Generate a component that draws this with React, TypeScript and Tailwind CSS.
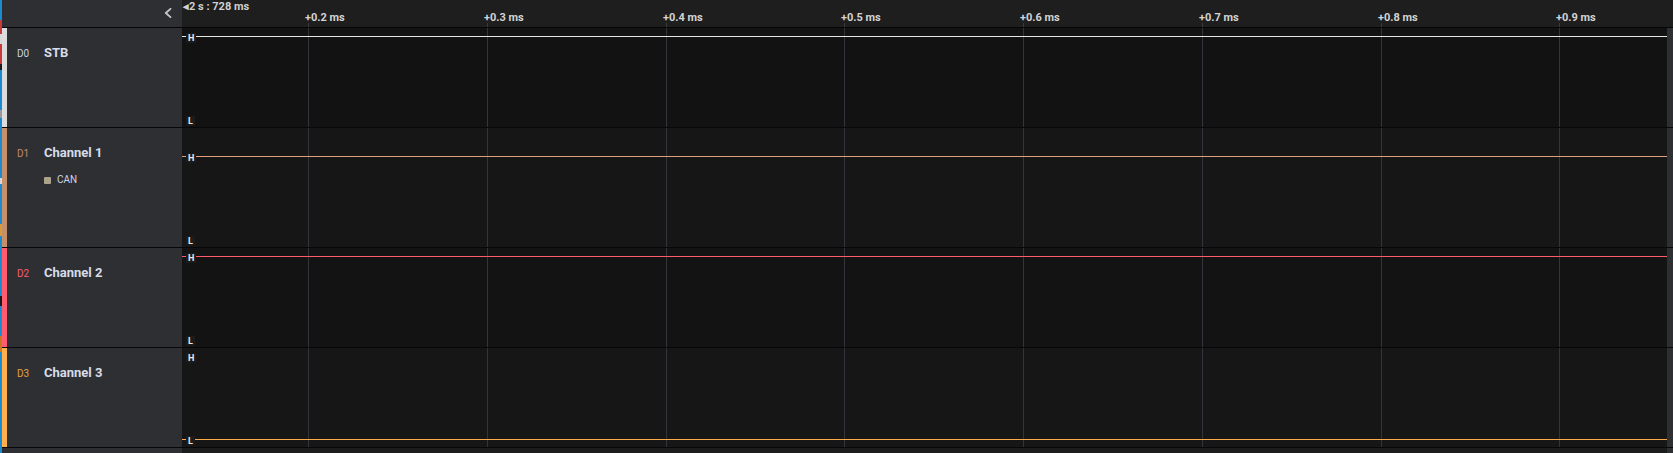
import React from "react";

type Channel = {
  id: string;
  name: string;
  color: string;
  strip: string;
  labelColor: string;
  level: "H" | "L";
  height: string;
  plotBg: string;
  decoder?: string;
  lanePad: string;
};

const channels: Channel[] = [
  {
    id: "D0",
    name: "STB",
    color: "bg-[#e6e6e6]",
    strip: "bg-[#dcdcdc]",
    labelColor: "text-[#c8d4e4]",
    level: "H",
    height: "h-[100px]",
    plotBg: "bg-[#121212]",
    lanePad: "pt-[8px]",
  },
  {
    id: "D1",
    name: "Channel 1",
    color: "bg-[#e0a07c]",
    strip: "bg-[#c4906c]",
    labelColor: "text-[#c48a6a]",
    level: "H",
    height: "h-[120px]",
    plotBg: "bg-[#161616]",
    decoder: "CAN",
    lanePad: "pt-[28px]",
  },
  {
    id: "D2",
    name: "Channel 2",
    color: "bg-[#ff5c6c]",
    strip: "bg-[#ff5c70]",
    labelColor: "text-[#ff5a6a]",
    level: "H",
    height: "h-[100px]",
    plotBg: "bg-[#131313]",
    lanePad: "pt-[8px]",
  },
  {
    id: "D3",
    name: "Channel 3",
    color: "bg-[#ffaa48]",
    strip: "bg-[#ffb04c]",
    labelColor: "text-[#e8a040]",
    level: "L",
    height: "h-[100px]",
    plotBg: "bg-[#161616]",
    lanePad: "pt-[8px]",
  },
];

// tick positions relative to the plot's left edge
const ticks = [0.2, 0.3, 0.4, 0.5, 0.6, 0.7, 0.8, 0.9].map((t, i) => ({
  label: `+${t.toFixed(1)} ms`,
  x: Math.round(126 + i * 178.75),
}));

function GridLines() {
  return (
    <>
      {ticks.map((t) => (
        <div
          key={t.label}
          className="absolute top-0 bottom-0 w-px bg-[#34353a]"
          style={{ left: t.x }}
        />
      ))}
    </>
  );
}

function LevelTag({ text }: { text: string }) {
  return (
    <span className="relative z-10 bg-[#1b1b1b] px-[2px] text-[9px] leading-[11px] font-bold text-[#e8e8e8]">
      {text}
    </span>
  );
}

function Lane({ ch }: { ch: Channel }) {
  return (
    <div className={`relative flex-1 ${ch.plotBg} overflow-hidden`}>
      <GridLines />
      <div className={`relative h-full flex flex-col ${ch.lanePad} pb-[8px]`}>
        <div className="relative flex-1 flex flex-col justify-between">
          {/* high rail */}
          <div className="relative flex items-center h-0">
            {ch.level === "H" && (
              <div className={`absolute left-0 right-0 h-px ${ch.color}`} />
            )}
            <div className="pl-[4px]">
              <LevelTag text="H" />
            </div>
          </div>
          {/* low rail */}
          <div className="relative flex items-center h-0">
            {ch.level === "L" && (
              <div className={`absolute left-0 right-0 h-px ${ch.color}`} />
            )}
            <div className="pl-[4px]">
              <LevelTag text="L" />
            </div>
          </div>
        </div>
      </div>
    </div>
  );
}

export default function App() {
  return (
    <div
      className="w-[1673px] h-[453px] flex bg-[#1c1c1c] overflow-hidden"
      style={{ fontFamily: "Roboto, 'Liberation Sans', sans-serif" }}
    >
      {/* sliver of the window behind */}
      <div className="w-[2px] flex flex-col bg-[#1c8ad0]">
        <div className="h-[20px]" />
        <div className="h-[14px] bg-[#c83a3a]" />
        <div className="h-[10px] bg-[#d8d8d8]" />
        <div className="h-[20px] bg-[#c83a3a]" />
        <div className="h-[6px] bg-[#1a1a1a]" />
        <div className="h-[40px]" />
        <div className="h-[8px] bg-[#9a9a9a]" />
        <div className="h-[60px]" />
        <div className="h-[6px] bg-[#d8d8d8]" />
        <div className="h-[40px]" />
        <div className="h-[12px] bg-[#d89a3a]" />
        <div className="h-[60px]" />
        <div className="h-[10px] bg-[#1a1a1a]" />
        <div className="h-[30px]" />
        <div className="h-[16px] bg-[#c8781e]" />
        <div className="flex-1" />
      </div>

      <div className="flex-1 flex flex-col">
        {/* header */}
        <div className="flex h-[28px] border-b border-[#060606]">
          <div className="w-[180px] bg-[#2e2f33] flex items-start justify-end pr-[10px] pt-[8px]">
            <svg width="8" height="10" viewBox="0 0 8 10" fill="none">
              <path
                d="M6.5 0.8 L1.8 5 L6.5 9.2"
                stroke="#c4c6cc"
                strokeWidth="1.8"
                strokeLinecap="round"
                strokeLinejoin="round"
              />
            </svg>
          </div>
          <div className="relative flex-1 bg-[#1e1e1e]">
            <div className="absolute left-[1px] top-0 text-[11px] leading-[13px] font-bold text-[#d0d0d0]">
              ◂2 s : 728 ms
            </div>
            {ticks.map((t) => (
              <React.Fragment key={t.label}>
                <div
                  className="absolute top-[11px] text-[11px] leading-[13px] font-bold text-[#d4d4d4] whitespace-nowrap"
                  style={{ left: t.x - 3 }}
                >
                  {t.label}
                </div>
                <div
                  className="absolute top-[23px] bottom-0 w-px bg-[#3a3b40]"
                  style={{ left: t.x }}
                />
              </React.Fragment>
            ))}
          </div>
          <div className="w-[6px] bg-[#1e1e1e]" />
        </div>

        {/* channel rows */}
        {channels.map((ch) => (
          <div key={ch.id} className={`flex ${ch.height} border-b border-[#08080a]`}>
            <div className={`w-[5px] ${ch.strip}`} />
            <div className="w-[175px] bg-[#2e2f33] pl-[10px] pt-[17px]">
              <div className="flex items-baseline">
                <span className={`w-[27px] text-[10px] ${ch.labelColor}`}>{ch.id}</span>
                <span className="text-[13px] leading-[16px] font-bold text-[#d6dce8]">
                  {ch.name}
                </span>
              </div>
              {ch.decoder && (
                <div className="flex items-center mt-[13px] pl-[27px]">
                  <span className="w-[7px] h-[7px] rounded-[1px] bg-[#aca38a]" />
                  <span className="ml-[6px] text-[10px] leading-[12px] text-[#ccd4e2]">
                    {ch.decoder}
                  </span>
                </div>
              )}
            </div>
            <Lane ch={ch} />
            <div className="w-[6px] bg-[#2e2f33]" />
          </div>
        ))}

        {/* bottom filler */}
        <div className="flex flex-1">
          <div className="w-[180px] bg-[#2e2f33]" />
          <div className="flex-1 bg-[#1c1c1c]" />
          <div className="w-[6px] bg-[#2e2f33]" />
        </div>
      </div>
    </div>
  );
}
